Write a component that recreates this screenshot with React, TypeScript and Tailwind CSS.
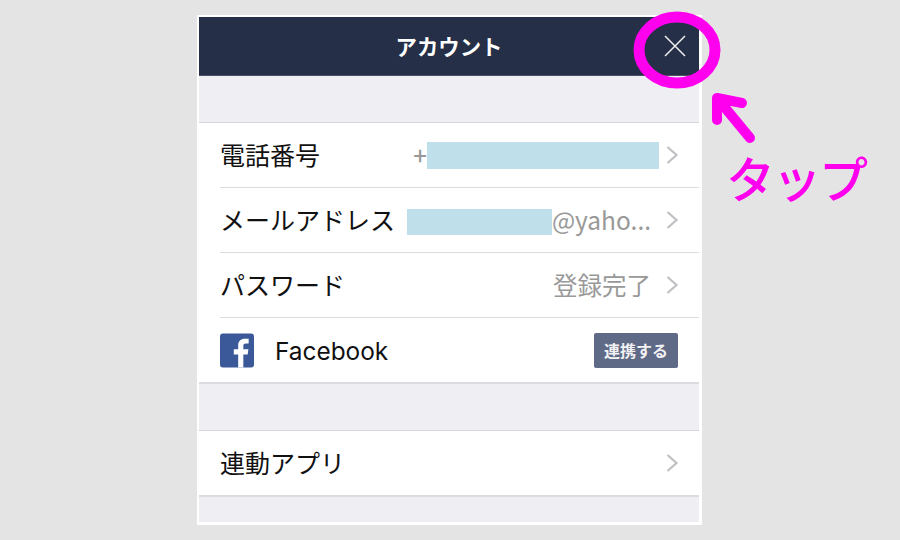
import React from "react";

const font = { fontFamily: '"Noto Sans CJK JP", "Noto Sans", sans-serif' };

function Chevron() {
  return (
    <svg width="14" height="20" viewBox="0 0 14 20" className="shrink-0" fill="none" stroke="#c0c0c4" strokeWidth="2.2">
      <path d="M2.5 2 L11.5 10 L2.5 18" />
    </svg>
  );
}

function Row({ label, children, last }: { label: React.ReactNode; children?: React.ReactNode; last?: boolean }) {
  return (
    <div className="pl-[21px]">
      <div className={`${last ? "h-[64px]" : "h-[65px] border-b border-[#dcdce0]"} flex items-center pr-[20px]`}>
        <span className="text-[25px] leading-none mb-[2px] text-[#111] whitespace-nowrap">{label}</span>
        <div className="ml-auto flex items-center">{children}</div>
      </div>
    </div>
  );
}

export default function App() {
  return (
    <div className="relative w-[900px] h-[540px] overflow-hidden bg-[#e4e4e4] pt-[15px] pl-[197px]" style={font}>
      <div className="w-[505px] h-[510px] bg-white pt-[2px] px-[2px] pb-[3px]">
        <div className="w-[500px] h-[505px] flex flex-col bg-[#eeeef3]">
          <div className="h-[59px] shrink-0 bg-[#252f48] border-b border-[#4a5062] flex items-center justify-center relative">
            <span className="text-[21.4px] font-bold text-white">アカウント</span>
            <svg className="absolute right-[13px] top-[18px]" width="22" height="22" viewBox="0 0 22 22" stroke="#f0f0f0" strokeWidth="1.5">
              <path d="M1 1 L21 21 M21 1 L1 21" />
            </svg>
          </div>
          <div className="h-[47px] shrink-0 border-b border-[#d5d5da]" />
          <div className="bg-white shrink-0">
            <Row label="電話番号">
              <span className="text-[24px] font-medium text-[#999] leading-none">+</span>
              <div className="w-[232px] h-[27px] bg-[#bfdfeb]" />
              <div className="w-[6px]" />
              <Chevron />
            </Row>
            <Row label="メールアドレス">
              <div className="w-[145px] h-[26px] mt-[4px] bg-[#bfdfeb]" />
              <span className="text-[24.5px] text-[#999] leading-none">@yaho...</span>
              <div className="w-[14px]" />
              <Chevron />
            </Row>
            <Row label="パスワード">
              <span className="text-[24.5px] text-[#999] leading-none">登録完了</span>
              <div className="w-[14px]" />
              <Chevron />
            </Row>
            <div className="h-[66px] flex items-center pl-[21px] pr-[21px] border-b-2 border-[#dcdce0]">
              <svg width="34" height="35" viewBox="0 0 35 35">
                <rect width="35" height="35" rx="3" fill="#3b5998" />
                <path
                  fill="#fff"
                  d="M24 35V21.5h4.5l.7-5.3H24v-3.4c0-1.5.5-2.6 2.7-2.6h2.8V5.5c-.5-.1-2.2-.2-4-.2-4 0-6.8 2.4-6.8 7v3.9h-4.5v5.3h4.5V35z"
                />
              </svg>
              <span className="ml-[21px] mt-[2px] text-[24.4px] leading-none text-[#111]" style={{ fontFamily: '"Inter", "Noto Sans", sans-serif' }}>
                Facebook
              </span>
              <div className="ml-auto w-[84px] h-[35px] rounded-[2px] bg-[#5f6a86] flex items-center justify-center text-[16px] font-bold text-[#f2f2f5]">
                連携する
              </div>
            </div>
          </div>
          <div className="h-[47px] shrink-0 border-b border-[#d5d5da]" />
          <div className="bg-white shrink-0 border-b-2 border-[#dcdce0]">
            <Row label="連動アプリ" last>
              <Chevron />
            </Row>
          </div>
        </div>
      </div>

      <svg className="absolute left-0 top-0 pointer-events-none" width="900" height="540" viewBox="0 0 900 540" fill="none" stroke="#ff00ee" strokeLinecap="round" strokeLinejoin="round">
        <ellipse cx="677" cy="50" rx="38" ry="33" strokeWidth="11" />
        <path d="M717 98 L750 138 M717 98 L717 120 M717 98 L742 103" strokeWidth="10" />
      </svg>
      <span className="absolute left-[726px] top-[148px] text-[49px] leading-[1.2] font-medium text-[#ff00ee] tracking-[-2.5px] whitespace-nowrap">
        タップ
      </span>
    </div>
  );
}
